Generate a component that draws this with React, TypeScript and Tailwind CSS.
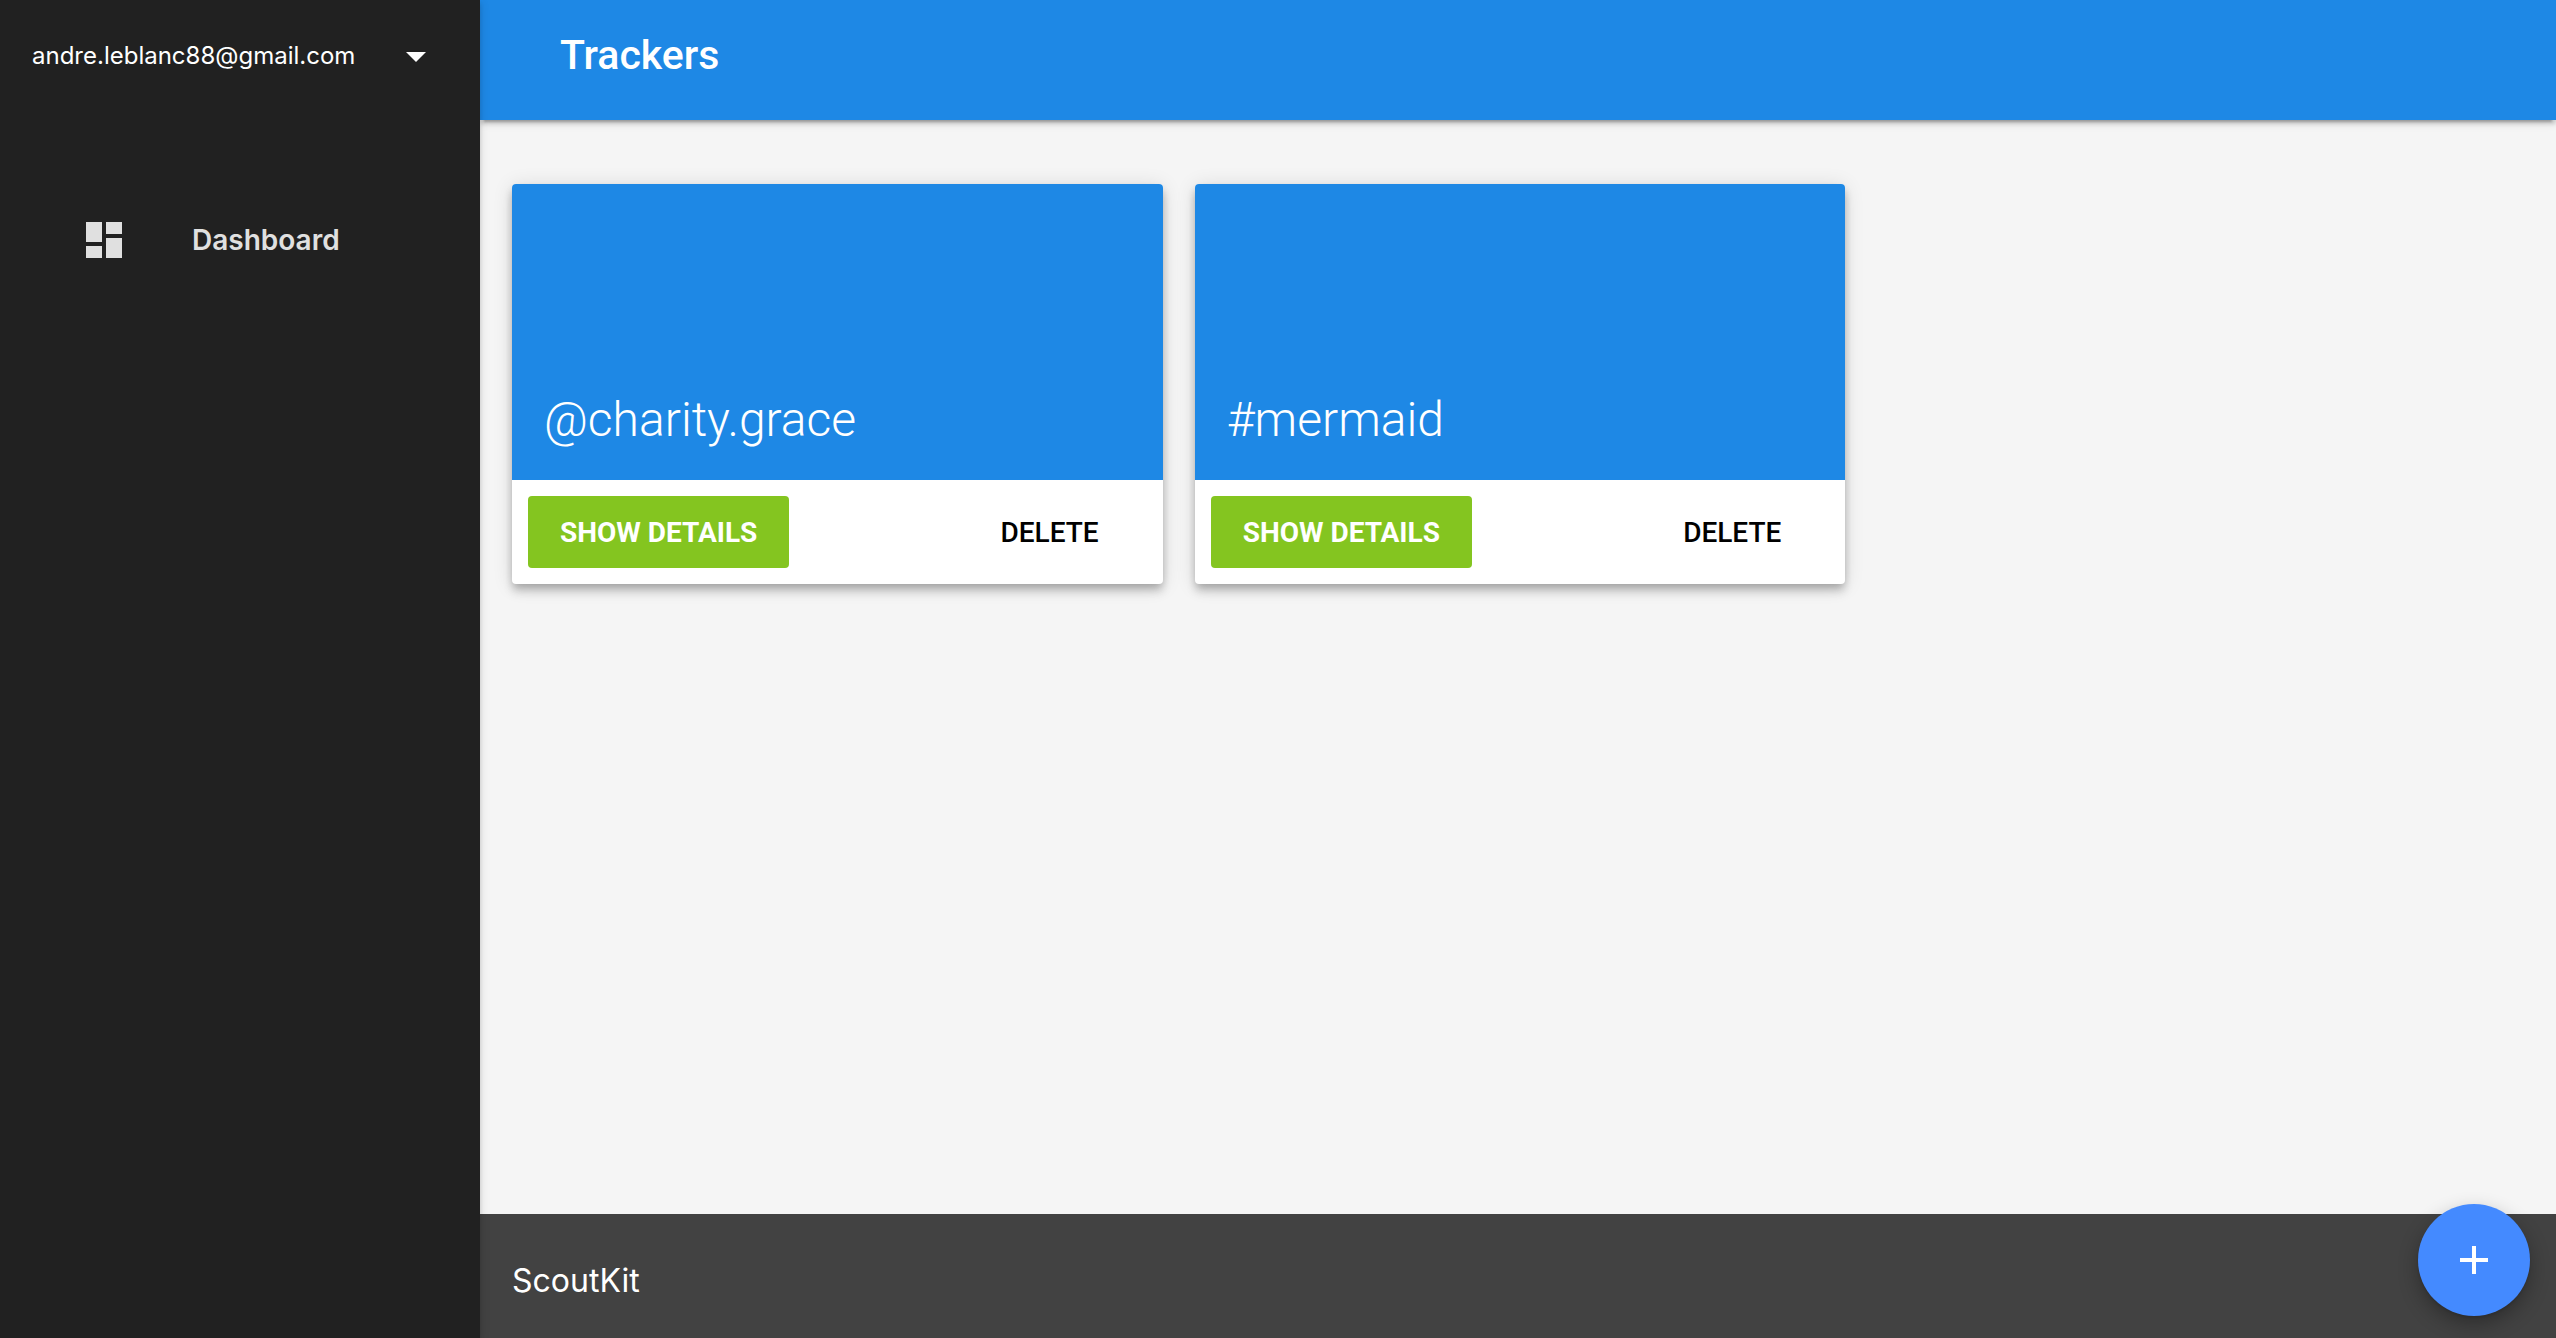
import React from "react";

const trackers = ["@charity.grace", "#mermaid"];

function TrackerCard({ name }: { name: string }) {
  return (
    <article className="rounded-sm bg-white shadow-[0_8px_10px_0_rgba(0,0,0,0.14),0_2px_20px_0_rgba(0,0,0,0.12),0_4px_8px_-2px_rgba(0,0,0,0.2)]">
      <div className="flex h-74 items-end rounded-t-sm bg-[#1e88e5] p-8">
        <h2 className="text-5xl leading-14 font-light text-white">{name}</h2>
      </div>
      <div className="flex items-center justify-between p-4 pr-8">
        <button type="button" className="h-18 rounded-sm bg-[#84c520] px-8 pt-px text-[28px] font-bold text-white">
          SHOW DETAILS
        </button>
        <button type="button" className="h-18 px-8 pt-px text-[28px] font-medium text-black">
          DELETE
        </button>
      </div>
    </article>
  );
}

export default function App() {
  return (
    <div className="flex min-h-screen bg-[#f5f5f5] font-[Roboto,sans-serif]">
      <aside className="z-10 w-120 shrink-0 bg-[#212121] font-[Inter,sans-serif] shadow-[0_4px_4px_0_rgba(0,0,0,0.14),0_6px_2px_-4px_rgba(0,0,0,0.2),0_2px_10px_0_rgba(0,0,0,0.12)]">
        <div className="flex h-28 items-center justify-between pr-10 pl-8 text-white">
          <span className="text-2xl">andre.leblanc88@gmail.com</span>
          <button type="button" aria-label="Account menu" className="size-12">
            <svg viewBox="0 0 24 24" className="size-12 fill-current" aria-hidden="true">
              <path d="M7 10l5 5 5-5z" />
            </svg>
          </button>
        </div>
        <nav className="pt-20">
          <a href="#dashboard" className="flex h-24 items-center gap-16 px-20 text-[#e0e0e0]">
            <svg viewBox="0 0 24 24" className="size-12 fill-current" aria-hidden="true">
              <path d="M3 13h8V3H3v10zm0 8h8v-6H3v6zm10 0h8V11h-8v10zm0-18v6h8V3h-8z" />
            </svg>
            <span className="text-[28px] font-semibold">Dashboard</span>
          </a>
        </nav>
      </aside>

      <div className="flex min-w-0 grow flex-col">
        <header className="flex h-30 items-center bg-[#1e88e5] px-20 pb-2 shadow-[0_4px_4px_0_rgba(0,0,0,0.14),0_6px_2px_-4px_rgba(0,0,0,0.2),0_2px_10px_0_rgba(0,0,0,0.12)]">
          <h1 className="text-[41px] font-medium text-white">Trackers</h1>
        </header>
        <main className="grid grow grid-cols-3 content-start gap-8 pt-16 pr-7 pl-8">
          {trackers.map((name) => (
            <TrackerCard key={name} name={name} />
          ))}
        </main>
        <footer className="flex h-31 items-center bg-[#424242] px-8 pt-2.5">
          <span className="font-[Inter,sans-serif] text-[32px] text-white">ScoutKit</span>
        </footer>
      </div>

      <button
        type="button"
        aria-label="Add tracker"
        className="fixed right-[26px] bottom-[22px] z-20 flex size-28 items-center justify-center rounded-full bg-[#448aff] text-white shadow-[0_2px_3px_0_rgba(0,0,0,0.12),0_8px_20px_0_rgba(0,0,0,0.3)]"
      >
        <svg viewBox="0 0 24 24" className="size-12 fill-current" aria-hidden="true">
          <path d="M19 13h-6v6h-2v-6H5v-2h6V5h2v6h6v2z" />
        </svg>
      </button>
    </div>
  );
}
